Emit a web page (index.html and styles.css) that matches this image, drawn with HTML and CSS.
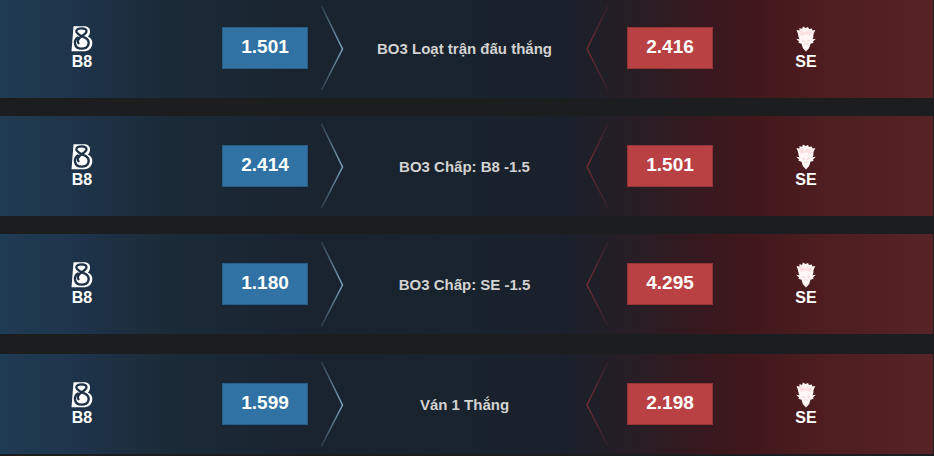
FILE: index.html
```html
<!DOCTYPE html>
<html lang="vi">
<head>
<meta charset="utf-8">
<meta name="viewport" content="width=device-width, initial-scale=1">
<title>B8 - SE</title>
<link rel="stylesheet" href="styles.css">
</head>
<body>
<svg class="sprite" aria-hidden="true">
  <defs>
    <linearGradient id="fade-blue" x1="0" y1="0" x2="0" y2="86" gradientUnits="userSpaceOnUse">
      <stop offset="0" stop-color="#7ba4bf" stop-opacity=".2"/>
      <stop offset=".5" stop-color="#7ba4bf"/>
      <stop offset="1" stop-color="#7ba4bf" stop-opacity=".2"/>
    </linearGradient>
    <linearGradient id="fade-red" x1="0" y1="0" x2="0" y2="86" gradientUnits="userSpaceOnUse">
      <stop offset="0" stop-color="#7a2e34" stop-opacity=".15"/>
      <stop offset=".5" stop-color="#7a2e34"/>
      <stop offset="1" stop-color="#7a2e34" stop-opacity=".15"/>
    </linearGradient>
  </defs>
  <symbol id="arrow-right" viewBox="0 0 24 86">
    <path d="M1.5 1 22.500 44 1.500 85" fill="none" stroke="url(#fade-blue)" stroke-width="1.5"/>
  </symbol>
  <symbol id="arrow-left" viewBox="0 0 24 86">
    <path d="M23 1 2 44 23 85" fill="none" stroke="url(#fade-red)" stroke-width="1.300"/>
  </symbol>
  <symbol id="logo-b8" viewBox="0 0 22 26">
    <path d="M2.500 .3H13C17.500 .3 19.300 3 19 6C18.800 8 18 9.500 16.800 10.500C20 11.800 21.500 14.500 21.300 17.500C21 22.500 17.500 25.300 12.500 25.300H.5Z" fill="#fff"/>
    <path d="M6.800 11.500C2.500 14 2.600 22.500 10.500 22.700C18.500 22.700 19.300 15.300 15 12.300C12 10.200 5.300 8.800 5.300 5.300C5.300 1.300 15.500 1.300 15.500 5.300C15.500 8.600 8.700 10 7 14.200C6.500 15.500 6.700 16.500 7.500 17.300" fill="none" stroke="#1e3146" stroke-width="2.300" stroke-linecap="round"/>
  </symbol>
  <symbol id="logo-se" viewBox="0 0 22 26">
    <path d="M1.500 4 4.500 4.500 4.500 2 7 3 8 .5 10.500 2 13 1 14 3 17 2.500 17.300 4.500 20.300 4 18.500 8 18.300 11.500 17.500 13.300 20.800 12.800 17.800 15.800 18.800 16.800 15.500 17.800 14.200 22 11 25.500 7.800 22 6.500 17.800 3.200 16.800 4.200 15.800 1.200 12.800 4.500 13.300 3.700 11.500 3 8Z" fill="#fff6f6"/>
    <path d="M3.500 5.500 8 4 9.500 7 12 4.500 17.500 5.500 16 10 11 8.500 6 10Z" fill="#ffe1e2"/>
    <path d="M7 14 10 15.500M15 14 12 15.500M9 18H13" fill="none" stroke="#fbd3d4" stroke-width="1.200"/>
  </symbol>
</svg>

<main class="markets">
  <section class="group">
    <article class="market">
      <div class="team"><svg class="logo"><use href="#logo-b8"/></svg><span>B8</span></div>
      <button class="odds odds-home" type="button">1.501</button>
      <div class="middle"><svg class="arrow"><use href="#arrow-right"/></svg><h2 class="title">BO3 Loạt trận đấu thắng</h2><svg class="arrow"><use href="#arrow-left"/></svg></div>
      <button class="odds odds-away" type="button">2.416</button>
      <div class="team"><svg class="logo"><use href="#logo-se"/></svg><span>SE</span></div>
    </article>
    <article class="market">
      <div class="team"><svg class="logo"><use href="#logo-b8"/></svg><span>B8</span></div>
      <button class="odds odds-home" type="button">2.414</button>
      <div class="middle"><svg class="arrow"><use href="#arrow-right"/></svg><h2 class="title">BO3 Chấp: B8 -1.5</h2><svg class="arrow"><use href="#arrow-left"/></svg></div>
      <button class="odds odds-away" type="button">1.501</button>
      <div class="team"><svg class="logo"><use href="#logo-se"/></svg><span>SE</span></div>
    </article>
    <article class="market">
      <div class="team"><svg class="logo"><use href="#logo-b8"/></svg><span>B8</span></div>
      <button class="odds odds-home" type="button">1.180</button>
      <div class="middle"><svg class="arrow"><use href="#arrow-right"/></svg><h2 class="title">BO3 Chấp: SE -1.5</h2><svg class="arrow"><use href="#arrow-left"/></svg></div>
      <button class="odds odds-away" type="button">4.295</button>
      <div class="team"><svg class="logo"><use href="#logo-se"/></svg><span>SE</span></div>
    </article>
  </section>
  <section class="group">
    <article class="market">
      <div class="team"><svg class="logo"><use href="#logo-b8"/></svg><span>B8</span></div>
      <button class="odds odds-home" type="button">1.599</button>
      <div class="middle"><svg class="arrow"><use href="#arrow-right"/></svg><h2 class="title">Ván 1 Thắng</h2><svg class="arrow"><use href="#arrow-left"/></svg></div>
      <button class="odds odds-away" type="button">2.198</button>
      <div class="team"><svg class="logo"><use href="#logo-se"/></svg><span>SE</span></div>
    </article>
  </section>
</main>
</body>
</html>
```
FILE: styles.css
```css
* {
  box-sizing: border-box;
}

body {
  margin: 0;
  background: #1c1d1e;
  color: #fff;
  font-family: "Liberation Sans", Arial, sans-serif;
  font-weight: 700;
}

.sprite {
  position: absolute;
  width: 0;
  height: 0;
}

.markets {
  display: flex;
  flex-direction: column;
  gap: 20px;
  margin: -2px 1px 2px 0;
}

.group {
  display: flex;
  flex-direction: column;
  gap: 18px;
}

.market {
  display: grid;
  grid-template-columns: 164fr 144fr 319fr 86fr 186fr 34fr;
  align-items: center;
  padding: 7px 0;
  background: linear-gradient(90deg, #203c52 0%, #1e3349 9%, #1b2a37 18%, #1a2430 32%, #19232d 50%, #1a202b 61%, #241e26 66%, #36191f 75%, #42171c 81%, #4d1d20 88%, #562326 100%);
}

.team {
  display: flex;
  flex-direction: column;
  align-items: center;
  padding-top: 2px;
  font-size: 16px;
  line-height: 20px;
}

.logo {
  width: 22px;
  height: 26px;
}

.odds {
  justify-self: end;
  width: 86px;
  height: 42px;
  padding: 0 0 2px;
  border: 1px solid;
  color: #fff;
  font: inherit;
  font-size: 19px;
  line-height: 24px;
  cursor: pointer;
}

.odds-home {
  background: #2f72a3;
  border-color: #275d86;
}

.odds-away {
  background: #b94143;
  border-color: #943539;
}

.middle {
  display: flex;
  align-items: center;
  padding: 0 18px 0 12px;
}

.arrow {
  flex: none;
  width: 24px;
  height: 86px;
}

.title {
  flex: 1;
  margin: 0;
  padding-top: 2px;
  color: #d2d2d2;
  font-size: 15px;
  line-height: 20px;
  text-align: center;
}
```
